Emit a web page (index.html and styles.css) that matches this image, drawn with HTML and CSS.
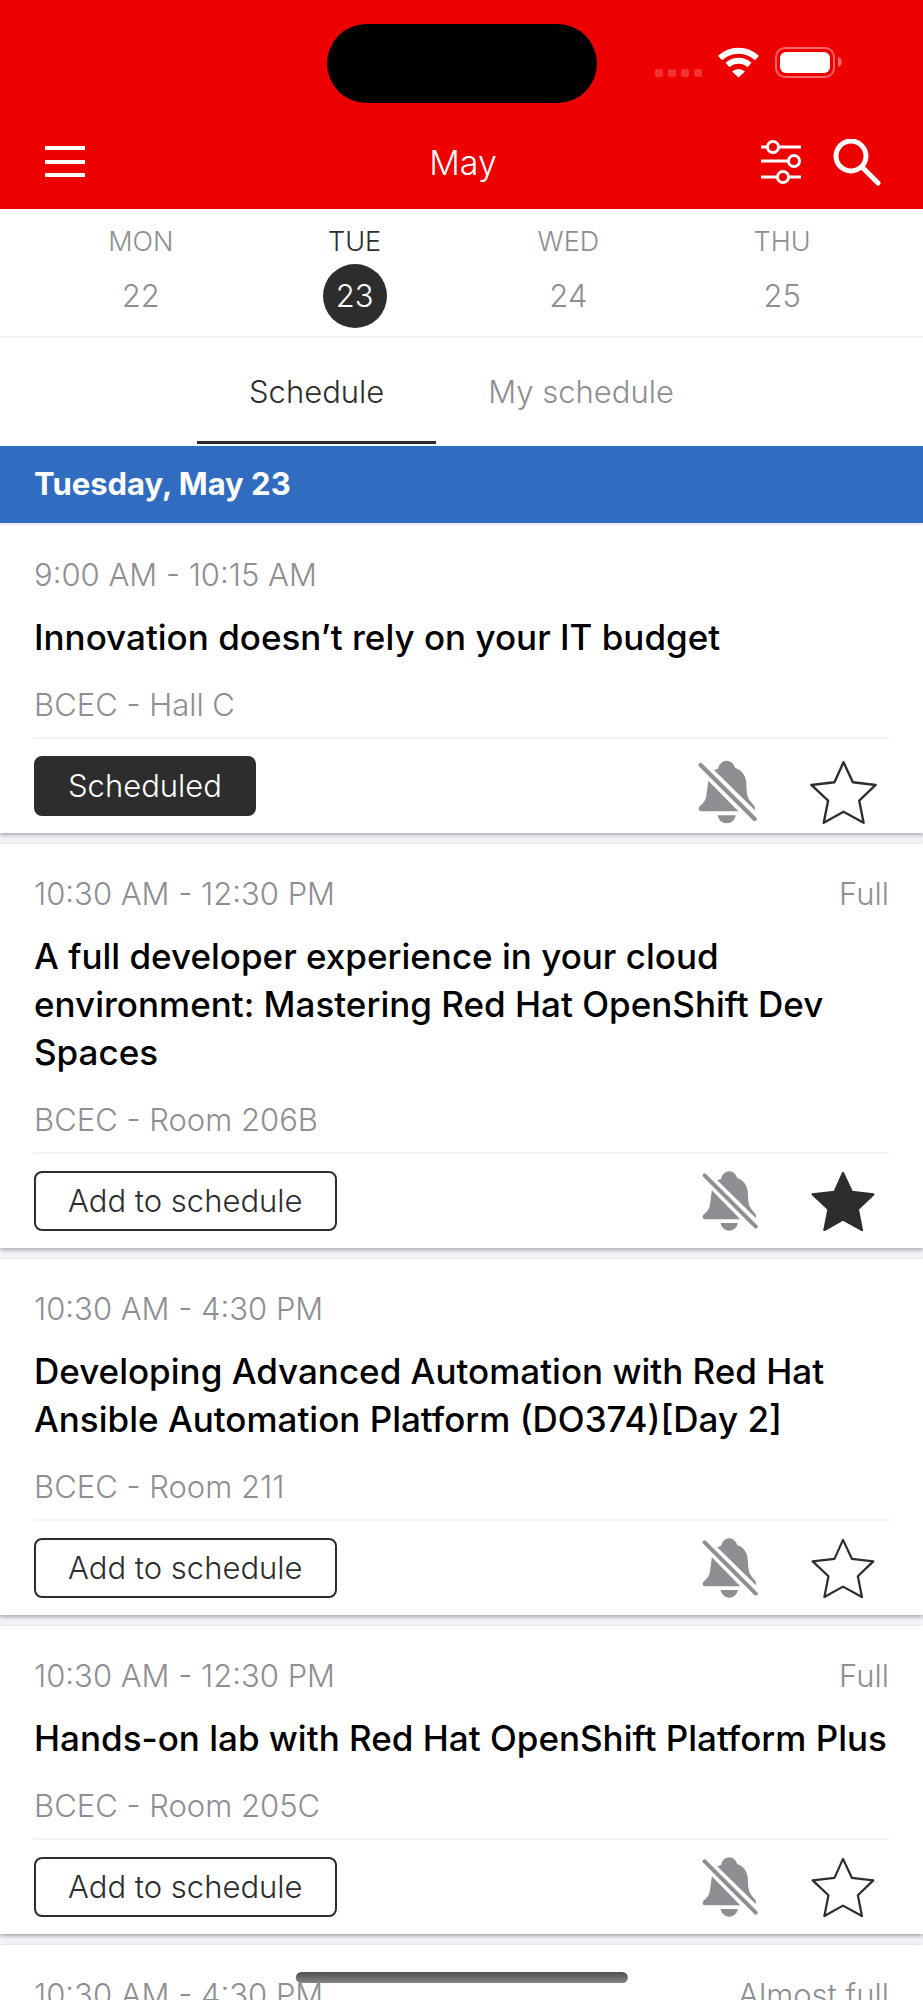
FILE: index.html
```html
<!DOCTYPE html>
<html lang="en">

<head>
    <meta charset="utf-8">
    <meta name="viewport" content="width=device-width, initial-scale=1">
    <title>May</title>
    <link rel="stylesheet" href="styles.css">
</head>

<body>
<svg class="sprite" aria-hidden="true">
    <symbol id="bell-off" viewBox="0 0 180 190">
        <path d="M48 29 L60 25 C64 10 74 1 86 1 C98 1 107 10 111 22 C134 30 144 48 145 70 C146 108 148 114 169 136 C171 140 171 144 170 149 Z"/>
        <path d="M31 61 L121 153 H10 C2 153 -1 145 5 138 C17 127 24 119 25 105 Z"/>
        <path d="M59 165 H113 C111 180 99 189 86 189 C73 189 61 180 59 165 Z"/>
        <path d="M8 14 L170 176" fill="none" stroke="currentColor" stroke-width="13" stroke-linecap="round"/>
    </symbol>
    <symbol id="star" viewBox="0 0 200 190">
        <path d="M100 6 L128 66 L196 74 L147 121 L160 187 L100 154 L41 187 L54 121 L4 74 L73 66 Z" stroke="currentColor" stroke-width="7" stroke-linejoin="round"/>
    </symbol>
</svg>
<div class="app">
    <header>
        <div class="status">
            <div class="island"></div>
            <div class="status-icons">
                <svg width="120" height="32" viewBox="0 0 120 32">
                    <g fill="#fff" opacity="0.2">
                        <rect x="0" y="23" width="8" height="8" rx="2"/>
                        <rect x="13" y="23" width="8" height="8" rx="2"/>
                        <rect x="26" y="23" width="8" height="8" rx="2"/>
                        <rect x="39" y="23" width="8" height="8" rx="2"/>
                    </g>
                    <g fill="none" stroke="#fff" stroke-width="6">
                        <path d="M65 12 A27 27 0 0 1 102 12"/>
                        <path d="M72.500 19 A16.500 16.500 0 0 1 94.500 19"/>
                    </g>
                    <path d="M77 25.500 A9.500 9.500 0 0 1 90 25.500 L83.500 31.500 Z" fill="#fff"/>
                </svg>
                <svg width="68" height="32" viewBox="0 0 68 32">
                    <rect x="1" y="2" width="58" height="29" rx="9" fill="none" stroke="#fff" stroke-width="2" opacity="0.4"/>
                    <rect x="5" y="6" width="50" height="21" rx="6" fill="#fff"/>
                    <path d="M63 11 C68 12 68 20 63 21 Z" fill="#fff" opacity="0.4"/>
                </svg>
            </div>
        </div>
        <div class="bar">
            <button type="button" aria-label="Menu">
                <svg width="40" height="48" viewBox="0 0 40 48">
                    <path d="M0 9 H40 M0 23 H40 M0 36 H40" stroke="#fff" stroke-width="4"/>
                </svg>
            </button>
            <h1>May</h1>
            <div class="bar-actions">
                <button type="button" aria-label="Filter">
                    <svg width="40" height="48" viewBox="0 0 40 48" fill="none" stroke="#fff" stroke-width="3">
                        <path d="M0 8 H6 M18 8 H40 M0 22 H27 M0 38 H16 M28 38 H40"/>
                        <circle cx="12" cy="8" r="5.500"/>
                        <circle cx="33" cy="22" r="5.500"/>
                        <circle cx="22" cy="38" r="5.500"/>
                    </svg>
                </button>
                <button type="button" aria-label="Search">
                    <svg width="48" height="48" viewBox="0 0 48 48" fill="none" stroke="#fff" stroke-width="5">
                        <circle cx="18" cy="17" r="15"/>
                        <path d="M29 28 L45 44" stroke-linecap="round"/>
                    </svg>
                </button>
            </div>
        </div>
    </header>
    <nav class="days">
        <a href="#22">MON <span>22</span></a>
        <a href="#23" class="active">TUE <span>23</span></a>
        <a href="#24">WED <span>24</span></a>
        <a href="#25">THU <span>25</span></a>
    </nav>
    <nav class="tabs">
        <a href="#schedule" class="active">Schedule</a>
        <a href="#my-schedule">My schedule</a>
    </nav>
    <main>
        <h2>Tuesday, May 23</h2>
        <article>
            <div class="time"><span>9:00 AM - 10:15 AM</span></div>
            <h3>Innovation doesn’t rely on your IT budget</h3>
            <div class="room">BCEC - Hall C</div>
            <div class="actions booked">
                <button type="button" class="add">Scheduled</button>
                <button type="button" class="bell" aria-label="Notifications off"><svg><use href="#bell-off"/></svg></button>
                <button type="button" class="star" aria-label="Favorite"><svg><use href="#star"/></svg></button>
            </div>
        </article>
        <article>
            <div class="time"><span>10:30 AM - 12:30 PM</span><span>Full</span></div>
            <h3>A full developer experience in your cloud environment: Mastering Red Hat OpenShift Dev Spaces</h3>
            <div class="room">BCEC - Room 206B</div>
            <div class="actions">
                <button type="button" class="add">Add to schedule</button>
                <button type="button" class="bell" aria-label="Notifications off"><svg><use href="#bell-off"/></svg></button>
                <button type="button" class="star on" aria-label="Favorite"><svg><use href="#star"/></svg></button>
            </div>
        </article>
        <article>
            <div class="time"><span>10:30 AM - 4:30 PM</span></div>
            <h3>Developing Advanced Automation with Red Hat Ansible Automation Platform (DO374)[Day 2]</h3>
            <div class="room">BCEC - Room 211</div>
            <div class="actions">
                <button type="button" class="add">Add to schedule</button>
                <button type="button" class="bell" aria-label="Notifications off"><svg><use href="#bell-off"/></svg></button>
                <button type="button" class="star" aria-label="Favorite"><svg><use href="#star"/></svg></button>
            </div>
        </article>
        <article>
            <div class="time"><span>10:30 AM - 12:30 PM</span><span>Full</span></div>
            <h3>Hands-on lab with Red Hat OpenShift Platform Plus</h3>
            <div class="room">BCEC - Room 205C</div>
            <div class="actions">
                <button type="button" class="add">Add to schedule</button>
                <button type="button" class="bell" aria-label="Notifications off"><svg><use href="#bell-off"/></svg></button>
                <button type="button" class="star" aria-label="Favorite"><svg><use href="#star"/></svg></button>
            </div>
        </article>
        <article>
            <div class="time"><span>10:30 AM - 4:30 PM</span><span>Almost full</span></div>
        </article>
    </main>
    <div class="home"></div>
</div>
</body>

</html>
```
FILE: styles.css
```css
* {
    box-sizing: border-box;
}

body {
    margin: 0;
    font-family: Inter, "Liberation Sans", sans-serif;
    font-size: 31px;
    font-weight: 300;
    line-height: 40px;
    color: #2d2d2d;
}

.sprite {
    display: none;
}

button {
    padding: 0;
    border: none;
    background: none;
    font: inherit;
    color: inherit;
    cursor: pointer;
}

button svg {
    display: block;
}

a {
    color: #8e8e93;
    text-decoration: none;
}

.app {
    display: flex;
    flex-direction: column;
    height: 100vh;
    overflow: hidden;
    background: #f2f2f7;
}

header {
    flex: none;
    background: #ee0000;
    color: white;
}

.status {
    display: grid;
    grid-template-columns: 1fr 270px 1fr;
    height: 128px;
    padding: 24px 80px 0;
}

.island {
    grid-column: 2;
    height: 79px;
    border-radius: 40px;
    background: black;
}

.status-icons {
    display: flex;
    justify-content: flex-end;
    padding-top: 22px;
}

.status-icons svg {
    flex: none;
}

.bar {
    display: grid;
    grid-template-columns: 1fr auto 1fr;
    align-items: center;
    height: 81px;
    padding: 0 42px 12px 45px;
}

.bar h1 {
    margin: 0;
    font-size: 34px;
    font-weight: 300;
}

.bar > button {
    justify-self: start;
}

.bar-actions {
    display: flex;
    justify-content: flex-end;
    gap: 32px;
}

.days {
    display: grid;
    grid-template-columns: repeat(4, 1fr);
    flex: none;
    padding: 13px 34px 8px;
    border-bottom: 2px solid #f2f2f7;
    background: white;
    font-size: 27px;
}

.days a {
    display: flex;
    flex-direction: column;
    align-items: center;
    gap: 2px;
}

.days span {
    width: 64px;
    border-radius: 50%;
    font-size: 31px;
    line-height: 64px;
    text-align: center;
}

.days .active {
    color: #2d2d2d;
}

.days .active span {
    background: #2d2d2d;
    color: white;
}

.tabs {
    display: flex;
    justify-content: center;
    flex: none;
    padding-bottom: 2px;
    background: white;
}

.tabs a {
    padding: 34px 52px 29px;
    border-bottom: 3px solid transparent;
}

.tabs .active {
    border-color: #2d2d2d;
    color: #2d2d2d;
}

main {
    flex: 1;
    min-height: 0;
    overflow: hidden;
}

h2 {
    margin: 0 0 2px;
    padding: 18px 34px 19px;
    background: #306dc1;
    color: white;
    font-size: 31px;
    font-weight: 700;
}

article {
    margin-bottom: 11px;
    padding: 30px 34px 17px;
    background: white;
    box-shadow: 0 2px 4px rgba(0, 0, 0, 0.3);
}

article h3 {
    margin: 18px 0 24px;
    color: black;
    font-size: 35px;
    font-weight: 500;
    line-height: 48px;
}

.time {
    display: flex;
    justify-content: space-between;
    color: #8e8e93;
}

.room {
    padding-bottom: 12px;
    border-bottom: 2px solid #f2f2f7;
    color: #8e8e93;
}

.actions {
    display: flex;
    align-items: flex-start;
    height: 77px;
    padding: 17px 14px 0 0;
}

.add {
    height: 60px;
    margin-right: auto;
    padding: 0 32px;
    border: 2px solid #2d2d2d;
    border-radius: 8px;
}

.bell {
    margin-right: 52px;
    color: #8e8e93;
}

.bell svg {
    width: 57px;
    height: 60px;
    fill: currentColor;
}

.star svg {
    width: 64px;
    height: 60px;
    fill: none;
}

.star.on svg {
    fill: currentColor;
}

.booked {
    padding-right: 12px;
}

.booked .add {
    background: #2d2d2d;
    color: white;
}

.booked svg {
    height: 64px;
    margin-top: 4px;
}

.booked .bell svg {
    width: 60px;
}

.booked .star svg {
    width: 67px;
}

.home {
    position: fixed;
    bottom: 17px;
    left: 50%;
    width: 36%;
    height: 11px;
    border-radius: 6px;
    background: linear-gradient(#505050, #858585);
    transform: translateX(-50%);
}
```
